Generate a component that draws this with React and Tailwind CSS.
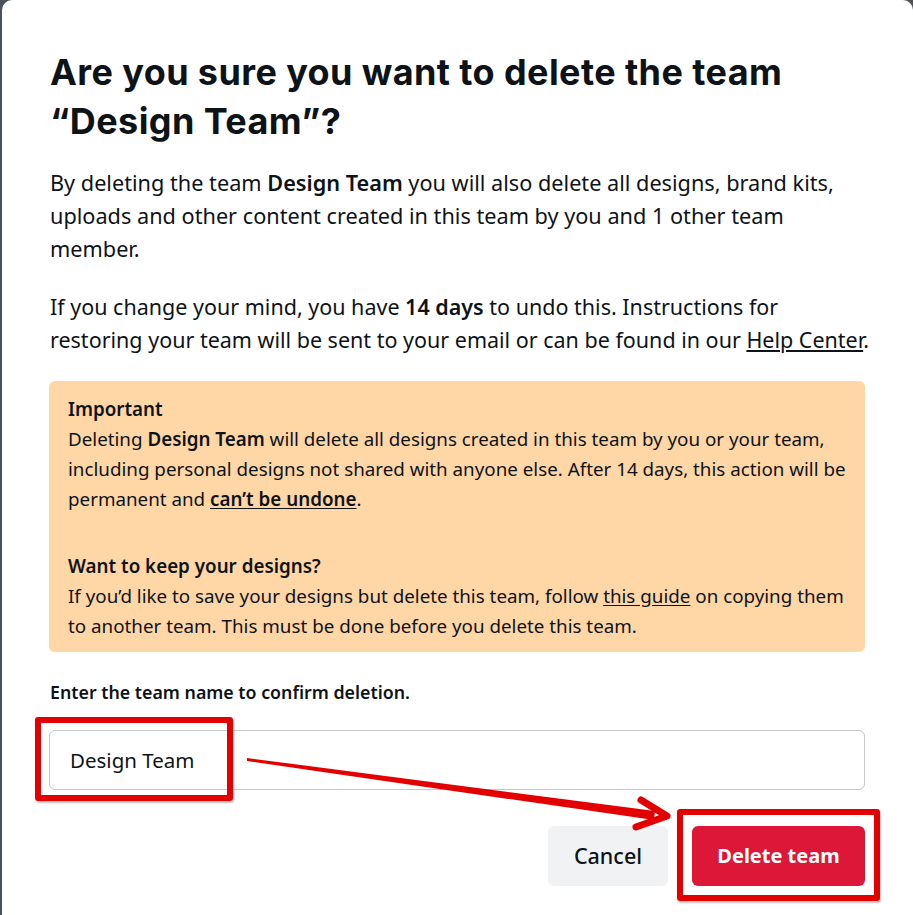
import React, { useState } from "react";

export default function App() {
  const [teamName, setTeamName] = useState("Design Team");

  return (
    <div className="relative h-[915px] w-[913px] overflow-hidden bg-[#4b5259]">
      {/* Modal */}
      <div className="ml-[2px] h-[940px] rounded-[10px] bg-white pl-[47px] pr-[48px] pt-[48px] text-[#0e1318] font-['Noto_Sans',sans-serif]">
        <h1 className="pl-[1px] text-[36px] font-bold leading-[49px] tracking-[0.4px] font-['Inter',sans-serif]">
          Are you sure you want to delete the team
          <br />
          “Design Team”?
        </h1>

        <p className="mt-[20px] whitespace-nowrap pl-[1px] text-[21.7px] leading-[33px]">
          By deleting the team <span className="font-semibold">Design Team</span> you will also delete all designs, brand kits,
          <br />
          uploads and other content created in this team by you and 1 other team
          <br />
          member.
        </p>

        <p className="mt-[25px] whitespace-nowrap pl-[1px] text-[21.5px] leading-[33px]">
          If you change your mind, you have <span className="font-semibold">14 days</span> to undo this. Instructions for
          <br />
          restoring your team will be sent to your email or can be found in our{" "}
          <a className="underline underline-offset-2">Help Center</a>.
        </p>

        {/* Important notice */}
        <div className="mt-[25px] whitespace-nowrap rounded-[6px] bg-[#ffd6a6] pl-[19px] pr-[18px] pb-[11px] pt-[13px] text-[18.8px] leading-[30px]">
          <div className="font-semibold">Important</div>
          <p>
            Deleting <span className="font-semibold">Design Team</span> will delete all designs created in this team by you or your team,
            <br />
            including personal designs not shared with anyone else. After 14 days, this action will be
            <br />
            permanent and <a className="font-semibold underline underline-offset-2">can’t be undone</a>.
          </p>
          <div className="mt-[37px] font-semibold">Want to keep your designs?</div>
          <p>
            If you’d like to save your designs but delete this team, follow{" "}
            <a className="underline underline-offset-2">this guide</a> on copying them
            <br />
            to another team. This must be done before you delete this team.
          </p>
        </div>

        {/* Confirm input */}
        <label className="mt-[28px] block pl-[1px] text-[17.8px] font-semibold leading-[24px]">
          Enter the team name to confirm deletion.
        </label>
        <input
          value={teamName}
          onChange={(e) => setTeamName(e.target.value)}
          className="mt-[26px] h-[60px] w-full rounded-[6px] border border-[#c4c7cb] px-[20px] text-[20.5px] text-[#0e1318] outline-none"
        />

        <div className="mt-[36px] flex justify-end gap-[24px]">
          <button className="h-[60px] w-[120px] rounded-[6px] bg-[#f1f2f4] text-[21.5px] font-medium">
            Cancel
          </button>
          <button className="h-[60px] w-[173px] rounded-[6px] bg-[#dc1738] text-[20px] font-bold text-white">
            Delete team
          </button>
        </div>
      </div>

      {/* Annotation overlays */}
      <div className="absolute left-[35px] top-[717px] h-[84px] w-[198px] rounded-[3px] border-[6px] border-[#e30000] shadow-[1px_2px_2px_rgba(0,0,0,0.25)]" />
      <div className="absolute left-[677px] top-[809px] h-[92px] w-[203px] rounded-[3px] border-[6px] border-[#e30000] shadow-[1px_2px_2px_rgba(0,0,0,0.25)]" />
      <svg className="absolute left-0 top-0" width="913" height="915" viewBox="0 0 913 915">
        <path d="M247 758 L655 811 L654 820 L247 761 Z" fill="#e30000" />
        <path d="M641 800 L667 816 L636 827" fill="none" stroke="#e30000" strokeWidth="7" strokeLinecap="round" strokeLinejoin="round" />
      </svg>
    </div>
  );
}
